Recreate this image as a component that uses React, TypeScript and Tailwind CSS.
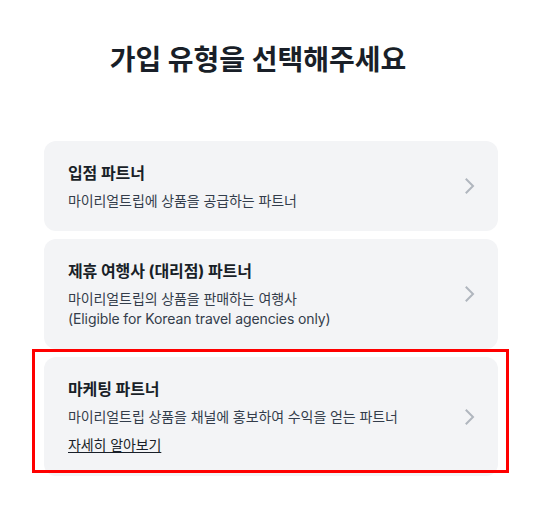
import React from "react"

const FONT = "font-['Inter','Noto_Sans_CJK_KR',sans-serif]"

type Partner = {
  title: string
  lines: string[]
  link?: string
  highlight?: boolean
}

const PARTNERS: Partner[] = [
  {
    title: "입점 파트너",
    lines: ["마이리얼트립에 상품을 공급하는 파트너"],
  },
  {
    title: "제휴 여행사 (대리점) 파트너",
    lines: ["마이리얼트립의 상품을 판매하는 여행사", "(Eligible for Korean travel agencies only)"],
  },
  {
    title: "마케팅 파트너",
    lines: ["마이리얼트립 상품을 채널에 홍보하여 수익을 얻는 파트너"],
    link: "자세히 알아보기",
    highlight: true,
  },
]

function Chevron() {
  return (
    <svg width="12" height="16" viewBox="0 0 12 16" fill="none" className="shrink-0">
      <polyline points="2.5,1.5 9,8 2.5,14.5" stroke="#b0b6be" strokeWidth="2" strokeLinecap="square" />
    </svg>
  )
}

function PartnerCard({ partner }: { partner: Partner }) {
  return (
    <div className="relative">
      <div className="flex items-center rounded-xl bg-[#f3f4f6] pl-6 pr-[22px] py-5">
        <div className="flex-1">
          <h3 className="text-[16px] leading-6 font-bold text-[#191f28] tracking-[-0.1px]">{partner.title}</h3>
          <div className="mt-1.5">
            {partner.lines.map((line) => (
              <p key={line} className="text-[14px] leading-5 text-[#333d4b] tracking-[-0.1px]">
                {line}
              </p>
            ))}
          </div>
          {partner.link && (
            <a href="#" className="mt-2 inline-block text-[14px] leading-5 text-[#191f28] underline underline-offset-2 tracking-[-0.1px]">
              {partner.link}
            </a>
          )}
        </div>
        <Chevron />
      </div>
      {partner.highlight && (
        <div className="pointer-events-none absolute -top-2 -left-3 -right-[11px] bottom-[3px] border-[3px] border-[#ff0000]" />
      )}
    </div>
  )
}

export default function App() {
  return (
    <div className={`min-h-[515px] w-full bg-white ${FONT}`}>
      <h1 className="pt-[42px] pr-8 text-center text-[28px] leading-9 font-bold text-[#191f28]">
        가입 유형을 선택해주세요
      </h1>
      <div className="ml-11 mr-[50px] mt-[63px] flex flex-col gap-2">
        {PARTNERS.map((p) => (
          <PartnerCard key={p.title} partner={p} />
        ))}
      </div>
    </div>
  )
}
